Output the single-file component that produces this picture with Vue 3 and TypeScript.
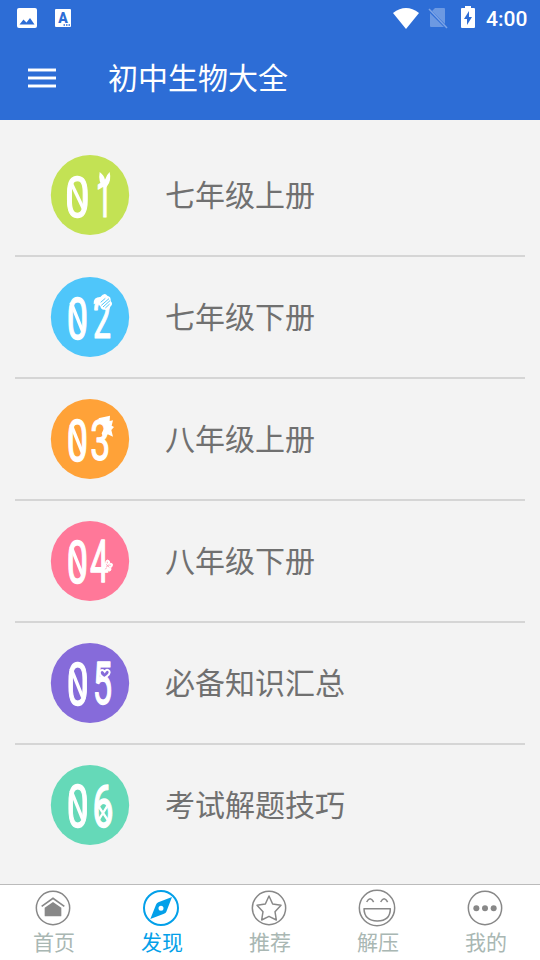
<script setup lang="ts">
import { ref } from 'vue';

interface Chapter {
    digit: string;
    title: string;
    color: string;
    zeroScale: string;
    digitTransform: string;
}

const chapters: Chapter[] = [
    {
        digit: '1',
        title: '七年级上册',
        color: '#c3e254',
        zeroScale: 'translate(97 200) scale(.74 .94)',
        digitTransform: 'translate(177 200) scale(.5 .88)',
    },
    {
        digit: '2',
        title: '七年级下册',
        color: '#4fc6fa',
        zeroScale: 'translate(97 200) scale(.64 .98)',
        digitTransform: 'translate(171 198) scale(.54 .92)',
    },
    {
        digit: '3',
        title: '八年级上册',
        color: '#ffa238',
        zeroScale: 'translate(97 200) scale(.64 .98)',
        digitTransform: 'translate(166 198) scale(.6 .92)',
    },
    {
        digit: '4',
        title: '八年级下册',
        color: '#ff7899',
        zeroScale: 'translate(97 200) scale(.64 1)',
        digitTransform: 'translate(163 198) scale(.56 1.01)',
    },
    {
        digit: '5',
        title: '必备知识汇总',
        color: '#866bda',
        zeroScale: 'translate(98 200) scale(.66 1)',
        digitTransform: 'translate(172 199) scale(.58 1)',
    },
    {
        digit: '6',
        title: '考试解题技巧',
        color: '#65d9b8',
        zeroScale: 'translate(98 200) scale(.66 1)',
        digitTransform: 'translate(174 200) scale(.64 1)',
    },
];

const tabs = [
    { id: 'home', label: '首页' },
    { id: 'discover', label: '发现' },
    { id: 'star', label: '推荐' },
    { id: 'relax', label: '解压' },
    { id: 'mine', label: '我的' },
];

const activeTab = ref('discover');
</script>

<template>
    <div class="app">
        <header class="header">
            <div class="status">
                <svg class="status__picture" viewBox="0 0 20 20">
                    <rect width="20" height="20" rx="2" fill="#fff" />
                    <path d="M2.5 16.5l4-5 3 3 3.5-4.5 4.5 6.5z" fill="#2d6dd6" />
                </svg>
                <svg class="status__letter" viewBox="0 0 16 18">
                    <rect width="16" height="18" rx="1" fill="#fff" />
                    <text x="8" y="13.5" class="status__a">A</text>
                    <path d="M8.5 16h1.5m1 0h1.5m1 0H15" stroke="#2d6dd6" stroke-width="1.5" />
                </svg>
                <span class="status__space"></span>
                <svg class="status__wifi" viewBox="0 0 26 21">
                    <path d="M0 5Q13-5 26 5L13 21z" fill="#fff" />
                </svg>
                <svg class="status__sim" viewBox="0 0 20 20">
                    <path d="M7 0h9q1 0 1 1v15L4 3zM2 5l14 14H3q-1 0-1-1z" fill="#6c99e2" />
                    <path d="M1 1l18 19" stroke="#7da4e6" stroke-width="1.5" />
                </svg>
                <svg class="status__battery" viewBox="0 0 14 22">
                    <path d="M4 0h6v2h3q1 0 1 1v18q0 1-1 1H1q-1 0-1-1V3q0-1 1-1h3z" fill="#fff" />
                    <path d="M8 5L3 13h3v6l5-8H8z" fill="#2d6dd6" />
                </svg>
                <span class="status__time">4:00</span>
            </div>
            <div class="toolbar">
                <button class="menu" aria-label="menu">
                    <span v-for="n in 3" :key="n" class="menu__bar"></span>
                </button>
                <h1 class="toolbar__title">初中生物大全</h1>
            </div>
        </header>

        <main class="list">
            <div v-for="item in chapters" :key="item.digit" class="row">
                <svg class="badge" viewBox="0 0 270 270">
                    <ellipse cx="135" cy="135" rx="117.5" ry="120" :fill="item.color" />
                    <text :transform="item.zeroScale" class="badge__digit">0</text>
                    <path
                        :d="item.digit === '1' ? 'M76 94l41 86' : 'M78 91l35 87'"
                        stroke="#fff"
                        stroke-width="10"
                    />
                    <text :transform="item.digitTransform" class="badge__digit">
                        {{ item.digit }}
                    </text>
                    <!-- sprout -->
                    <path
                        v-if="item.digit === '1'"
                        d="M164 66q13 10 16 23 5-15 14-23 6 27-8 43l-5 7-7-6q-15-14-10-44z"
                        fill="#fff"
                    />
                    <!-- hatched shell -->
                    <g v-else-if="item.digit === '2'">
                        <path
                            d="M146 97q-2-22 20-22 13-15 21-4 12 3 10 16 9 9-1 17-4 15-16 9-12 2-14-10-10-13-20-6z"
                            fill="#fff"
                        />
                        <path
                            d="M167 91l14-12m-12 21l23-20m-18 25l21-19m-14 22l13-12"
                            :stroke="item.color"
                            stroke-width="3"
                        />
                    </g>
                    <!-- sun rays -->
                    <path
                        v-else-if="item.digit === '3'"
                        d="M160 73l35-8-1 16 10-2-4 16 7 4-8 9 5 20-16-7-14 9-4-12 9-18q2-14-10-17z"
                        fill="#fff"
                    />
                    <!-- flower -->
                    <g v-else-if="item.digit === '4'">
                        <path
                            d="M182 142q0-10 6-10t6 10q11-1 8 7-1 4-5 6 3 9-3 10-4 1-7-5-6 6-10 1-3-4 2-10-8-3-4-8 2-3 7-1z"
                            fill="#fff"
                            stroke="#fff"
                            stroke-width="3"
                        />
                        <path
                            d="M183 145l10 9m0-9l-10 9m4-17v5m10 6h-4m-12 12l3-4"
                            :stroke="item.color"
                            stroke-width="2"
                        />
                    </g>
                    <!-- heart -->
                    <path
                        v-else-if="item.digit === '5'"
                        d="M178 120q-17-10-13-20 6-9 14 1 7-11 14-2 5 9-15 21z"
                        :fill="item.color"
                        stroke="#fff"
                        stroke-width="6"
                    />
                    <!-- crossed seed -->
                    <path
                        v-else
                        d="M158 135l31 46m1-48l-31 50"
                        stroke="#fff"
                        stroke-width="7"
                    />
                </svg>
                <span class="row__title">{{ item.title }}</span>
            </div>
        </main>

        <nav class="tabs">
            <button
                v-for="tab in tabs"
                :key="tab.id"
                class="tab"
                :class="{ 'tab--active': tab.id === activeTab }"
                @click="activeTab = tab.id"
            >
                <svg class="tab__icon" viewBox="0 0 108 108">
                    <g v-if="tab.id === 'home'">
                        <circle cx="54" cy="54" r="50" />
                        <path d="M20 49l34-24 34 24" stroke-width="5" />
                        <path class="solid" d="M29 53l25-17 25 17v24q0 2-2 2H31q-2 0-2-2z" />
                    </g>
                    <g v-else-if="tab.id === 'discover'">
                        <circle cx="54" cy="54" r="51" stroke-width="6" />
                        <path
                            class="solid"
                            fill-rule="evenodd"
                            d="M87 21L70 65q-2 5-7 6L22 87l17-43q2-5 7-7zM54 47a7 7 0 100 15 7 7 0 000-15z"
                        />
                    </g>
                    <g v-else-if="tab.id === 'star'">
                        <circle cx="54" cy="54" r="50" />
                        <path
                            d="M54 18l11 24 25 4-18 19 4 25-22-11-22 11 4-25-18-19 25-4z"
                            stroke-linejoin="round"
                        />
                    </g>
                    <g v-else-if="tab.id === 'relax'">
                        <circle cx="54" cy="54" r="53" />
                        <path d="M23 36q10-19 21 0m21 0q10-19 21 0" />
                        <path d="M15 56h79q0 36-39 37-39-1-40-37z" stroke-linejoin="round" />
                    </g>
                    <g v-else>
                        <circle cx="54" cy="54" r="50" />
                        <circle class="solid" cx="28" cy="55" r="9" />
                        <circle class="solid" cx="54" cy="55" r="9" />
                        <circle class="solid" cx="80" cy="55" r="9" />
                    </g>
                </svg>
                <span class="tab__label">{{ tab.label }}</span>
            </button>
        </nav>
    </div>
</template>

<style>
body {
    margin: 0;
}
</style>

<style scoped>
.app {
    display: flex;
    flex-direction: column;
    height: 960px;
    overflow: hidden;
    background: #f3f3f3;
    font-family: Roboto, "Noto Sans CJK SC", sans-serif;
}

button {
    border: 0;
    padding: 0;
    background: none;
    font: inherit;
}

svg {
    display: block;
    flex: none;
    overflow: visible;
}

.header {
    height: 120px;
    flex: none;
    background: #2d6dd6;
    color: #fff;
}

.status {
    display: flex;
    align-items: center;
    height: 36px;
    padding: 0 12px 0 17px;
}

.status__picture {
    width: 20px;
    height: 20px;
}

.status__letter {
    width: 16px;
    height: 18px;
    margin-left: 18px;
}

.status__a {
    font: 900 14px Roboto, sans-serif;
    text-anchor: middle;
    fill: #2d6dd6;
}

.status__space {
    flex: 1;
}

.status__wifi {
    width: 26px;
    height: 21px;
    margin-right: 9px;
}

.status__sim {
    width: 20px;
    height: 20px;
    margin-right: 13px;
}

.status__battery {
    width: 14px;
    height: 22px;
    margin: 0 11px 2px 0;
}

.status__time {
    width: 42px;
    padding-top: 2px;
    font-size: 21px;
    font-weight: 500;
    line-height: 38px;
}

.toolbar {
    display: flex;
    align-items: center;
    height: 84px;
    padding-left: 28px;
}

.menu {
    display: grid;
    gap: 4px;
    width: 28px;
    margin: 0 52px 1px 0;
}

.menu__bar {
    height: 2px;
    border: solid #8fb1e9;
    border-width: 1px 0;
    background: #fff;
}

.toolbar__title {
    margin: 0;
    padding-top: 2px;
    font-size: 30px;
    font-weight: 400;
    line-height: 44px;
}

.list {
    flex: 1;
    padding: 15px 15px 0;
}

.row {
    display: flex;
    align-items: center;
    height: 120px;
    padding-left: 30px;
    border-bottom: 2px solid #d5d5d5;
}

.row:last-child {
    border-bottom: 0;
}

.badge {
    width: 90px;
    height: 90px;
    margin-right: 30px;
}

.badge__digit {
    font: 400 178px Roboto, sans-serif;
    text-anchor: middle;
    fill: #fff;
    stroke: #fff;
    stroke-width: 4;
    stroke-linejoin: round;
}

.row__title {
    padding-top: 2px;
    color: #707070;
    font-size: 30px;
    line-height: 44px;
}

.tabs {
    display: grid;
    grid-template-columns: repeat(5, 1fr);
    height: 75px;
    flex: none;
    border-top: 1px solid #bbb;
    background: #fff;
}

.tab {
    display: flex;
    flex-direction: column;
    align-items: center;
    padding-top: 5px;
    color: #888;
}

.tab__icon {
    width: 36px;
    height: 36px;
    margin-right: 2px;
    fill: none;
    stroke: currentColor;
    stroke-width: 4.5;
}

.solid {
    fill: currentColor;
    stroke: none;
}

.tab__label {
    padding-top: 1px;
    color: #a9b7b3;
    font-size: 21px;
    line-height: 32px;
}

.tab--active,
.tab--active .tab__label {
    color: #03a0e9;
}
</style>
